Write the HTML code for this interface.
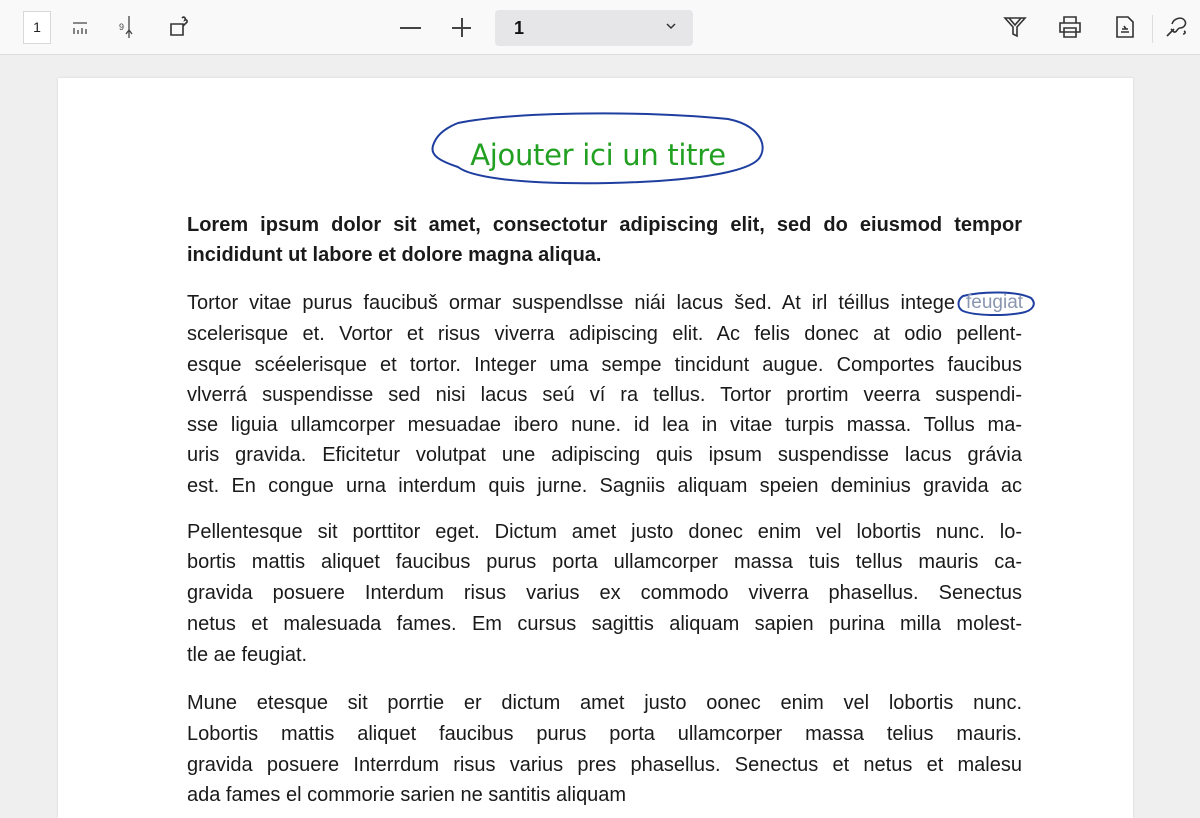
<!DOCTYPE html>
<html><head><meta charset="utf-8"><style>
html,body{margin:0;padding:0;width:1200px;height:800px;overflow:hidden;background:#efefef;font-family:"Liberation Sans","DejaVu Sans",sans-serif;}
.tb{position:absolute;left:0;top:0;width:1200px;height:54px;background:#f9f9f9;border-bottom:1px solid #dcdcdc;}
.page{position:absolute;left:58px;top:78px;width:1075px;height:760px;background:#fff;box-shadow:0 0 2px #d0d0d0;}
.ln{position:absolute;left:187px;width:835px;white-space:nowrap;text-align:justify;text-align-last:justify;font-size:20px;color:#1a1a1a;line-height:24px;}
.b{font-weight:bold;}
.nj{text-align-last:left;}
</style></head><body>
<div class="tb">
 <div style="position:absolute;left:23px;top:11px;width:26px;height:31px;border:1px solid #d8d8d8;background:#fff;font-size:14px;line-height:31px;text-align:center;color:#222">1</div>
 <svg style="position:absolute;left:70px;top:20px" width="20" height="18" viewBox="0 0 20 18" fill="none" stroke="#444" stroke-width="1.3"><path d="M3 3h14M4 8v6M8 10v4M12 8v6M16 9v5"/></svg>
 <svg style="position:absolute;left:118px;top:14px" width="20" height="26" viewBox="0 0 20 26" fill="none" stroke="#444" stroke-width="1.3"><path d="M11 2v22M8 20l3-4 3 4"/><text x="1" y="16" font-size="9" fill="#444" stroke="none" font-family="Liberation Sans">9</text></svg>
 <svg style="position:absolute;left:168px;top:14px" width="26" height="24" viewBox="0 0 26 24" fill="none" stroke="#333" stroke-width="1.6"><path d="M3 10h12v11H3zM14 4c2-2 4 0 3 2 2-1 3 2 1 3l-3 3"/></svg>
 <div style="position:absolute;left:400px;top:27px;width:21px;height:2px;background:#444"></div>
 <div style="position:absolute;left:452px;top:27px;width:19px;height:1.5px;background:#444"></div>
 <div style="position:absolute;left:461px;top:18px;width:1.5px;height:19px;background:#444"></div>
 <div style="position:absolute;left:495px;top:10px;width:198px;height:36px;background:#e6e6e8;border-radius:4px"></div>
 <div style="position:absolute;left:514px;top:18px;font-size:18px;font-weight:bold;color:#111">1</div>
 <svg style="position:absolute;left:666px;top:23px" width="10" height="7" viewBox="0 0 10 7" fill="none" stroke="#333" stroke-width="1.5"><path d="M1 1l4 4 4-4"/></svg>
 <svg style="position:absolute;left:1002px;top:14px" width="26" height="26" viewBox="0 0 26 26" fill="none" stroke="#333" stroke-width="1.6"><path d="M3 4h20l-8 9v9l-4-2v-7z M7 4l6 7 6-7"/></svg>
 <svg style="position:absolute;left:1058px;top:15px" width="24" height="24" viewBox="0 0 24 24" fill="none" stroke="#333" stroke-width="1.6"><path d="M6 2h12v6H6zM2 8h20v9H2zM6 13h12v9H6z"/></svg>
 <svg style="position:absolute;left:1114px;top:15px" width="22" height="24" viewBox="0 0 22 24" fill="none" stroke="#333" stroke-width="1.6"><path d="M3 2h11l5 5v15H3z M7 17h8M8 14h6M10 11l2 3"/></svg>
 <div style="position:absolute;left:1152px;top:15px;width:1px;height:28px;background:#ddd"></div>
 <svg style="position:absolute;left:1164px;top:14px" width="26" height="26" viewBox="0 0 26 26" fill="none" stroke="#333" stroke-width="1.6"><path d="M3 22l7-7M8 10c2-6 10-8 13-3 2 4-2 7-5 7-3 0-3 5-6 4l-3-3M20 17c2 1 1 3-1 3"/></svg>
</div>
<div class="page" style="height:740px"></div>
<svg style="position:absolute;left:428px;top:105px" width="340" height="90" viewBox="0 0 340 90" fill="none" stroke="#1f3fa0" stroke-width="2"><path d="M30 18C90 6 220 6 300 14c30 6 40 25 32 38-8 14-60 24-150 26C80 80 40 70 30 62 12 56 0 50 6 38 10 28 20 22 30 18z"/></svg>
<div style="position:absolute;left:428px;top:138px;width:340px;text-align:center;font-size:29px;color:#22a022;font-family:'DejaVu Sans','Liberation Sans',sans-serif;letter-spacing:-0.3px">Ajouter ici un titre</div>
<svg style="position:absolute;left:955px;top:290px" width="82" height="34" viewBox="0 0 82 34" fill="none" stroke="#1f3fa0" stroke-width="2"><path d="M8 6c20-5 55-5 68 2 6 6 2 13-10 15-18 3-45 3-58-2C2 18 2 10 8 6z"/></svg>
<div class="ln b" style="top:213px">Lorem ipsum dolor sit amet, consectotur adipiscing elit, sed do eiusmod tempor</div>
<div class="ln b nj" style="top:243px">incididunt ut labore et dolore magna aliqua.</div>
<div class="ln" style="top:291px;width:768px">Tortor vitae purus faucibuš ormar suspendlsse niái lacus šed. At irl téillus intege</div>
<div style="position:absolute;left:966px;top:291px;font-size:19px;color:#8a96b0;line-height:24px">feugiat</div>
<div class="ln" style="top:322px">scelerisque et. Vortor et risus viverra adipiscing elit. Ac felis donec at odio pellent-</div>
<div class="ln" style="top:353px">esque scéelerisque et tortor. Integer uma sempe tincidunt augue. Comportes faucibus</div>
<div class="ln" style="top:383px">vlverrá suspendisse sed nisi lacus seú ví ra tellus. Tortor prortim veerra suspendi-</div>
<div class="ln" style="top:413px">sse liguia ullamcorper mesuadae ibero nune. id lea in vitae turpis massa. Tollus ma-</div>
<div class="ln" style="top:443px">uris gravida. Eficitetur volutpat une adipiscing quis ipsum suspendisse lacus grávia</div>
<div class="ln" style="top:474px">est. En congue urna interdum quis jurne. Sagniis aliquam speien deminius gravida ac</div>
<div class="ln" style="top:520px">Pellentesque sit porttitor eget. Dictum amet justo donec enim vel lobortis nunc. lo-</div>
<div class="ln" style="top:550px">bortis mattis aliquet faucibus purus porta ullamcorper massa tuis tellus mauris ca-</div>
<div class="ln" style="top:581px">gravida posuere Interdum risus varius ex commodo viverra phasellus. Senectus</div>
<div class="ln" style="top:612px">netus et malesuada fames. Em cursus sagittis aliquam sapien purina milla molest-</div>
<div class="ln nj" style="top:643px">tle ae feugiat.</div>
<div class="ln" style="top:691px">Mune etesque sit porrtie er dictum amet justo oonec enim vel lobortis nunc.</div>
<div class="ln" style="top:722px">Lobortis mattis aliquet faucibus purus porta ullamcorper massa telius mauris.</div>
<div class="ln" style="top:753px">gravida posuere Interrdum risus varius pres phasellus. Senectus et netus et malesu</div>
<div class="ln nj" style="top:783px">ada fames el commorie sarien ne santitis aliquam</div>
</body></html>
